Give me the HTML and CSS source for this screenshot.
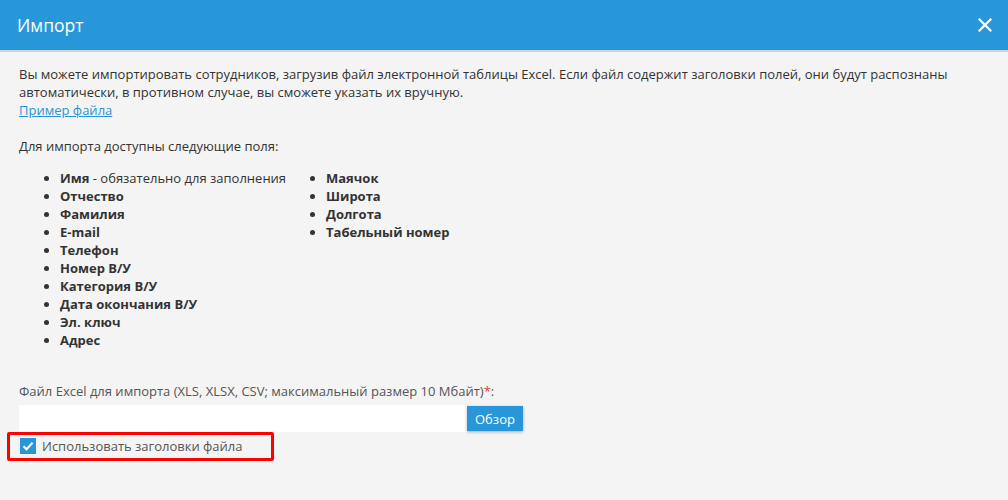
FILE: index.html
```html
<!DOCTYPE html>
<html lang="ru">
<head>
    <meta charset="UTF-8">
    <title>Импорт</title>
    <link rel="stylesheet" href="styles.css">
</head>
<body>
    <div class="modal">
        <header class="modal-header">
            <h1>Импорт</h1>
            <button class="close" aria-label="Закрыть">
                <svg width="14" height="14" viewBox="0 0 14 14">
                    <path d="M1.5 1.5 L12.5 12.5 M12.5 1.5 L1.5 12.5" stroke="#fff" stroke-width="2.2" stroke-linecap="square"/>
                </svg>
            </button>
        </header>
        <div class="modal-body">
            <p class="intro">
                Вы можете импортировать сотрудников, загрузив файл электронной таблицы Excel. Если файл содержит заголовки полей, они будут распознаны автоматически, в противном случае, вы сможете указать их вручную.<br>
                <a href="#">Пример файла</a>
            </p>
            <p class="fields-title">Для импорта доступны следующие поля:</p>
            <div class="fields">
                <ul>
                    <li><b>Имя</b> - обязательно для заполнения</li>
                    <li><b>Отчество</b></li>
                    <li><b>Фамилия</b></li>
                    <li><b>E-mail</b></li>
                    <li><b>Телефон</b></li>
                    <li><b>Номер В/У</b></li>
                    <li><b>Категория В/У</b></li>
                    <li><b>Дата окончания В/У</b></li>
                    <li><b>Эл. ключ</b></li>
                    <li><b>Адрес</b></li>
                </ul>
                <ul>
                    <li><b>Маячок</b></li>
                    <li><b>Широта</b></li>
                    <li><b>Долгота</b></li>
                    <li><b>Табельный номер</b></li>
                </ul>
            </div>
            <label class="file-label">Файл Excel для импорта (XLS, XLSX, CSV; максимальный размер 10 Мбайт)<span class="req">*</span>:</label>
            <div class="file-row">
                <div class="file-input"></div>
                <button class="browse">Обзор</button>
            </div>
            <label class="highlight">
                <span class="checkbox">
                    <svg width="12" height="10" viewBox="0 0 12 10">
                        <path d="M1.5 5.2 L4.6 8.2 L10.5 1.8" fill="none" stroke="#fff" stroke-width="2"/>
                    </svg>
                </span>
                Использовать заголовки файла
            </label>
        </div>
    </div>
</body>
</html>
```

FILE: styles.css
```css
body {
    margin: 0;
    padding: 0;
    font-family: "Open Sans", sans-serif;
    font-size: 13px;
    color: #333;
    background-color: #f4f4f4;
}
.modal-header {
    background-color: #2897da;
    height: 50px;
    border-bottom: 2px solid #cfd3d6;
    display: flex;
    align-items: center;
    justify-content: space-between;
    padding: 0 16px 0 17px;
}
.modal-header h1 {
    margin: 0;
    color: #fff;
    font-size: 17.5px;
    font-weight: normal;
}
.close {
    background: none;
    border: none;
    padding: 0;
    display: flex;
    cursor: pointer;
}
.modal-body {
    padding: 13px 19px 0 19px;
    line-height: 18px;
}
.intro {
    margin: 0 0 18px 0;
}
.intro a {
    color: #2a93d5;
}
.fields-title {
    margin: 0 0 14px 0;
}
.fields {
    display: flex;
    padding-left: 41px;
}
.fields ul {
    margin: 0;
    padding: 0;
    width: 266px;
}
.fields li b {
    font-weight: bold;
}
.file-label {
    display: block;
    margin-top: 33px;
    color: #555;
}
.req {
    color: #e23b3b;
}
.file-row {
    display: flex;
    align-items: center;
    margin-top: 5px;
}
.file-input {
    width: 448px;
    height: 27px;
    background: #fff;
}
.browse {
    background-color: #2897da;
    color: #fff;
    border: none;
    font-family: "Open Sans", sans-serif;
    font-size: 13px;
    height: 25px;
    padding: 0 8px;
    box-shadow: 0 1px 3px rgba(0, 0, 0, 0.3);
    cursor: pointer;
}
.highlight {
    display: inline-flex;
    align-items: center;
    gap: 6px;
    border: 3px solid #f00;
    border-radius: 2px;
    padding: 2px 28px 3px 10px;
    margin-left: -12px;
    color: #555;
}
.checkbox {
    width: 16px;
    height: 16px;
    background-color: #2897da;
    display: flex;
    align-items: center;
    justify-content: center;
}
```
